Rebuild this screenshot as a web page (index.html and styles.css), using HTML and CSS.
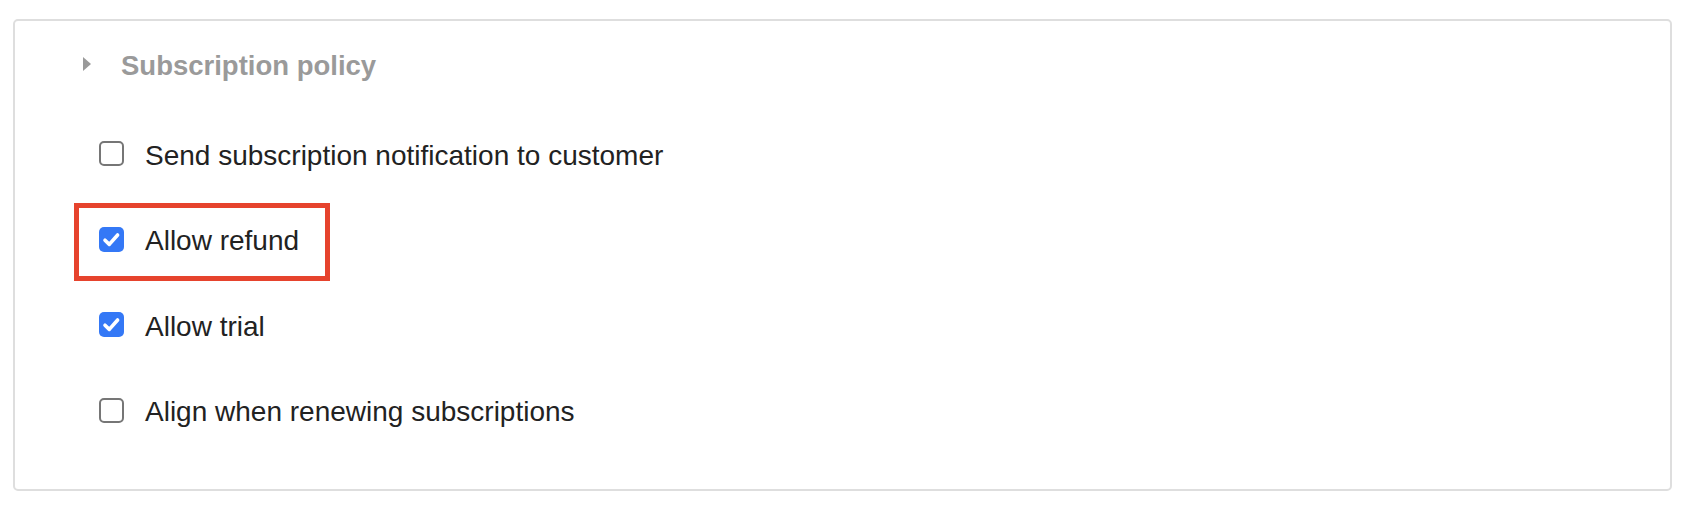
FILE: index.html
```html
<!DOCTYPE html>
<html lang="en">
<head>
<meta charset="utf-8">
<title>Subscription policy</title>
<link rel="stylesheet" href="styles.css">
</head>
<body>
  <section class="panel">
    <div class="panel-header">
      <span class="caret"></span>
      <h2 class="panel-title">Subscription policy</h2>
    </div>
    <ul class="options">
      <li class="option">
        <label class="check">
          <span class="box"></span>
          <span class="label-text">Send subscription notification to customer</span>
        </label>
      </li>
      <li class="option highlighted">
        <label class="check">
          <span class="box checked">
            <svg viewBox="0 0 25 25" width="25" height="25"><path d="M6 13.2 L10.3 17.4 L18.6 8" fill="none" stroke="#fff" stroke-width="3.6" stroke-linecap="round" stroke-linejoin="round"/></svg>
          </span>
          <span class="label-text">Allow refund</span>
        </label>
      </li>
      <li class="option">
        <label class="check">
          <span class="box checked">
            <svg viewBox="0 0 25 25" width="25" height="25"><path d="M6 13.2 L10.3 17.4 L18.6 8" fill="none" stroke="#fff" stroke-width="3.6" stroke-linecap="round" stroke-linejoin="round"/></svg>
          </span>
          <span class="label-text">Allow trial</span>
        </label>
      </li>
      <li class="option">
        <label class="check">
          <span class="box"></span>
          <span class="label-text">Align when renewing subscriptions</span>
        </label>
      </li>
    </ul>
  </section>
</body>
</html>
```

FILE: styles.css
```css
html, body {
  margin: 0;
  padding: 0;
  background: #ffffff;
}

body {
  font-family: "Liberation Sans", Arial, sans-serif;
  color: #222222;
}

.panel {
  box-sizing: border-box;
  margin: 19px 0 0 13px;
  width: 1659px;
  height: 472px;
  border: 2px solid #dedede;
  border-radius: 5px;
  background: #fff;
}

.panel-header {
  display: flex;
  align-items: center;
  height: 90px;
  padding-left: 68px;
}

.caret {
  width: 0;
  height: 0;
  border-top: 7px solid transparent;
  border-bottom: 7px solid transparent;
  border-left: 8px solid #9a9a9a;
  margin-right: 30px;
  margin-top: -4px;
}

.panel-title {
  margin: 0;
  font-size: 27.5px;
  font-weight: bold;
  color: #9a9a9a;
  line-height: 1;
}

.options {
  list-style: none;
  margin: 0;
  padding: 0 0 0 84px;
}

.option {
  position: relative;
  height: 85.5px;
  display: flex;
  align-items: center;
}

.check {
  display: inline-flex;
  align-items: center;
  gap: 21px;
}

.box {
  box-sizing: border-box;
  width: 25px;
  height: 25px;
  border: 2px solid #767676;
  border-radius: 5px;
  background: #fff;
  display: inline-flex;
  align-items: center;
  justify-content: center;
  flex: none;
}

.box.checked {
  border: none;
  background: #3478f6;
}

.box svg {
  display: block;
}

.label-text {
  font-size: 28px;
  line-height: 32px;
  margin-top: 4px;
  color: #222;
}

.highlighted::after {
  content: "";
  position: absolute;
  left: -25px;
  top: 6.5px;
  width: 256px;
  height: 78px;
  box-sizing: border-box;
  border: 5px solid #e6432d;
}
```
